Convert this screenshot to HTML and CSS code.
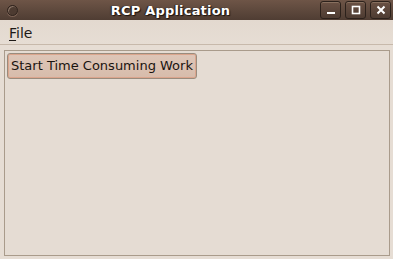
FILE: index.html
```html
<!DOCTYPE html>
<html lang="en">

<head>
  <meta charset="UTF-8">
  <title>RCP Application</title>
  <link rel="stylesheet" href="styles.css">
</head>

<body>
  <div class="window">

    <!-- Title bar -->
    <div class="titlebar">
      <span class="win-menu"></span>
      <span class="title">RCP Application</span>
      <div class="win-buttons">
        <span class="win-btn">
          <svg width="10" height="10" viewBox="0 0 10 10"><rect x="1" y="7" width="8" height="2" fill="#fff"/></svg>
        </span>
        <span class="win-btn">
          <svg width="10" height="10" viewBox="0 0 10 10"><rect x="1.5" y="1.5" width="7" height="7" fill="none" stroke="#fff" stroke-width="1.6"/></svg>
        </span>
        <span class="win-btn">
          <svg width="10" height="10" viewBox="0 0 10 10"><path d="M1.5 1.5 L8.5 8.5 M8.5 1.5 L1.5 8.5" stroke="#fff" stroke-width="2"/></svg>
        </span>
      </div>
    </div>

    <!-- Menu bar -->
    <div class="menubar">
      <span class="menu-item"><u>F</u>ile</span>
    </div>

    <!-- Content -->
    <div class="content">
      <div class="panel">
        <button class="button">Start Time Consuming Work</button>
      </div>
    </div>
  </div>
</body>

</html>
```

FILE: styles.css
```css
body {
  margin: 0;
  font-family: "DejaVu Sans", sans-serif;
  background-color: #e6ddd4;
}

.window {
  width: 393px;
  height: 259px;
  display: flex;
  flex-direction: column;
  overflow: hidden;
}

.titlebar {
  height: 20px;
  background: linear-gradient(#6e5547, #4f3d33);
  display: flex;
  align-items: center;
  position: relative;
}

.win-menu {
  width: 9px;
  height: 9px;
  margin-left: 7px;
  border-radius: 50%;
  border: 1px solid #2e221c;
  box-shadow: inset 1px 1px 0 #8a7466, 0 1px 0 #7a6052;
  background: #4d3b31;
}

.title {
  position: absolute;
  left: 0;
  right: 52px;
  text-align: center;
  color: #fff;
  font-weight: bold;
  font-size: 13px;
  letter-spacing: 0.2px;
  text-shadow: 1px 1px 1px #1c120c, -1px 0 1px #2a1c14;
}

.win-buttons {
  margin-left: auto;
  margin-right: 2px;
  display: flex;
  gap: 4px;
}

.win-btn {
  width: 19px;
  height: 16px;
  border: 1px solid #2c211b;
  border-radius: 3px;
  background: linear-gradient(#6a5144, #4e3c32);
  box-shadow: inset 0 1px 0 #88705f;
  display: flex;
  align-items: center;
  justify-content: center;
}

.menubar {
  height: 24px;
  border-bottom: 1px solid #c7b9ab;
  background: linear-gradient(#e3d9cf, #e6ddd4);
  display: flex;
  align-items: center;
}

.menu-item {
  margin-left: 9px;
  margin-top: 2px;
  font-size: 14px;
  color: #1e1a17;
}

.menu-item u {
  text-underline-offset: 2px;
}

.content {
  flex: 1;
  padding: 5px 3px 3px 4px;
  display: flex;
}

.panel {
  flex: 1;
  border: 1px solid #a99b8b;
  background-color: #e5dcd3;
  padding: 2px;
  display: flex;
  align-items: flex-start;
}

.button {
  font-family: "DejaVu Sans", sans-serif;
  font-size: 13px;
  color: #1a1410;
  background: linear-gradient(#dec6b8, #d7bcab);
  border: 1px solid #9a8c7d;
  border-radius: 3px;
  box-shadow: inset 0 0 0 1px #dba58d;
  padding: 4px 3px 5px 3px;
  margin: 0;
  height: 26px;
}
```
